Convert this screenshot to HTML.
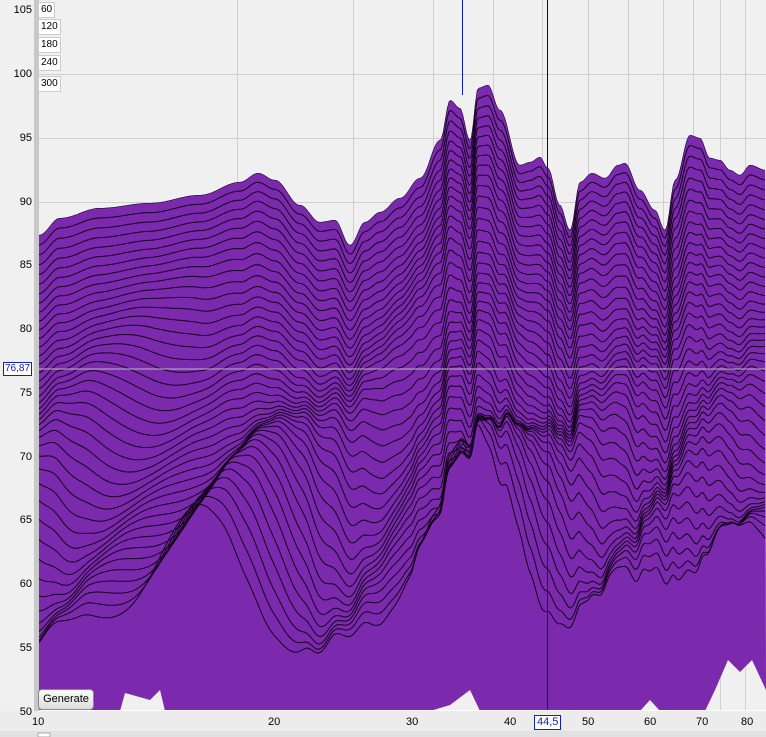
<!DOCTYPE html>
<html><head><meta charset="utf-8"><style>
body{margin:0;width:766px;height:737px;background:#f0f0f0;overflow:hidden;font-family:"Liberation Sans",sans-serif;font-size:11px;position:relative}
.yl{position:absolute;right:734px;width:30px;text-align:right;color:#000}
.xl{position:absolute;top:716px;color:#000}
.tb{position:absolute;left:38px;background:#fff;border:1px solid #ccc;font-size:10px;padding:0 2px;height:14px;line-height:14px}
</style></head><body>
<div style="position:absolute;left:34px;top:0;width:5px;height:712px;background:#c8c8c8"></div>
<svg id="s" width="766" height="737" style="position:absolute;left:0;top:0">
<rect x="39" y="0" width="727" height="711" fill="#f0f0f0"/>
<g id="grid" stroke="#cfcfcf" stroke-width="1"></g>
<clipPath id="cp"><polygon id="env"/></clipPath>
<polygon id="envf" fill="#7b2aae"/>
<g id="lines" clip-path="url(#cp)" fill="none" stroke="#14001c" stroke-width="1"></g>
<line x1="39" y1="369" x2="766" y2="369" stroke="#bbb"/>
<line x1="547.5" y1="0" x2="547.5" y2="711" stroke="#111"/>
<line x1="462.5" y1="0" x2="462.5" y2="95" stroke="#1020c0"/>
<rect x="39" y="710" width="727" height="2" fill="#fff"/>
<rect x="0" y="711" width="766" height="20" fill="#ececec"/>
<rect x="0" y="731" width="766" height="6" fill="#e2e2e2"/>
<rect x="38" y="733" width="12" height="4" fill="#fff" stroke="#aaa"/>
</svg>
<div class="yl" style="top:4px">105</div><div class="yl" style="top:68px">100</div><div class="yl" style="top:132px">95</div><div class="yl" style="top:196px">90</div><div class="yl" style="top:259px">85</div><div class="yl" style="top:323px">80</div><div class="yl" style="top:387px">75</div><div class="yl" style="top:451px">70</div><div class="yl" style="top:514px">65</div><div class="yl" style="top:578px">60</div><div class="yl" style="top:642px">55</div><div class="yl" style="top:706px">50</div>
<div style="position:absolute;left:3px;top:362px;border:1px solid #1020c0;background:#fff;color:#1020c0;font-size:10px;padding:0 1px;line-height:12px">76,87</div>
<div class="tb" style="top:2px">60</div><div class="tb" style="top:19px">120</div><div class="tb" style="top:37px">180</div><div class="tb" style="top:55px">240</div><div class="tb" style="top:76px">300</div>
<div style="position:absolute;left:38px;top:689px;width:54px;height:19px;border:1px solid #888;border-radius:4px;background:linear-gradient(#fafafa,#ddd);font-size:11px;line-height:19px;text-align:center">Generate</div>
<div class="xl" style="left:32px">10</div><div class="xl" style="left:268px">20</div><div class="xl" style="left:406px">30</div><div class="xl" style="left:504px">40</div><div class="xl" style="left:582px">50</div><div class="xl" style="left:644px">60</div><div class="xl" style="left:696px">70</div><div class="xl" style="left:741px">80</div>
<div style="position:absolute;left:534px;top:715px;border:1px solid #1020c0;background:#fff;color:#1020c0;font-size:11px;padding:0 2px;line-height:13px">44,5</div>
<script>
var ns="http://www.w3.org/2000/svg";
var g=document.getElementById('grid');
[74,138,202,265,329,393,457,520,584,648].forEach(function(y){var l=document.createElementNS(ns,'line');l.setAttribute('x1',39);l.setAttribute('x2',766);l.setAttribute('y1',y+.5);l.setAttribute('y2',y+.5);g.appendChild(l)});
[237,353,433,493,542,588,628,663,693,720,745].forEach(function(x){var l=document.createElementNS(ns,'line');l.setAttribute('y1',0);l.setAttribute('y2',711);l.setAttribute('x1',x+.5);l.setAttribute('x2',x+.5);g.appendChild(l)});
var P=[[39,235],[60,218],[100,208],[150,203],[200,195],[240,182],[258,173],[275,180],[300,205],[320,222],[335,220],[350,245],[365,222],[380,212],[400,198],[420,178],[440,140],[450,100],[460,108],[470,140],[478,88],[488,85],[500,110],[520,165],[530,162],[540,157],[548,168],[560,205],[570,230],[580,182],[592,173],[605,178],[618,165],[625,163],[640,190],[655,210],[665,230],[675,180],[690,135],[700,138],[710,158],[720,160],[730,170],[740,175],[750,165],[766,170]];
function env(x){for(var i=0;i<P.length-1;i++){if(x<=P[i+1][0]){var t=(x-P[i][0])/(P[i+1][0]-P[i][0]);t=(1-Math.cos(t*Math.PI))/2;return P[i][1]+t*(P[i+1][1]-P[i][1]);}}return P[P.length-1][1];}
var pts=[];for(var x=39;x<=766;x+=2)pts.push(x+','+env(x).toFixed(1));
pts.push('766,690','752,660','740,672','728,660','715,690','705,711','660,711','650,700','640,711','560,711','520,711','480,711','470,690','450,705','430,711','390,711','300,711','240,711','165,711','160,690','150,700','125,693','120,711','39,711');
document.getElementById('env').setAttribute('points',pts.join(' '));
document.getElementById('envf').setAttribute('points',pts.join(' '));
var L=document.getElementById('lines');
var N=42;
for(var k=0;k<N;k++){var d='';var f=k/N;for(var x=39;x<=766;x+=2){
var base=env(x);var sm=(env(x-30)+env(x+30)+base)/3;
var drop=f*400+f*f*40*Math.sin(x/40+k*0.15);
var y=(1-f)*base+f*sm+drop+f*f*30*Math.sin(x/22+k*0.35)+f*20*Math.sin(x/55+k*0.2);
d+=(x==39?'M':'L')+x+','+y.toFixed(1);}
var p=document.createElementNS(ns,'path');p.setAttribute('d',d);L.appendChild(p);}
</script>
</body></html>
